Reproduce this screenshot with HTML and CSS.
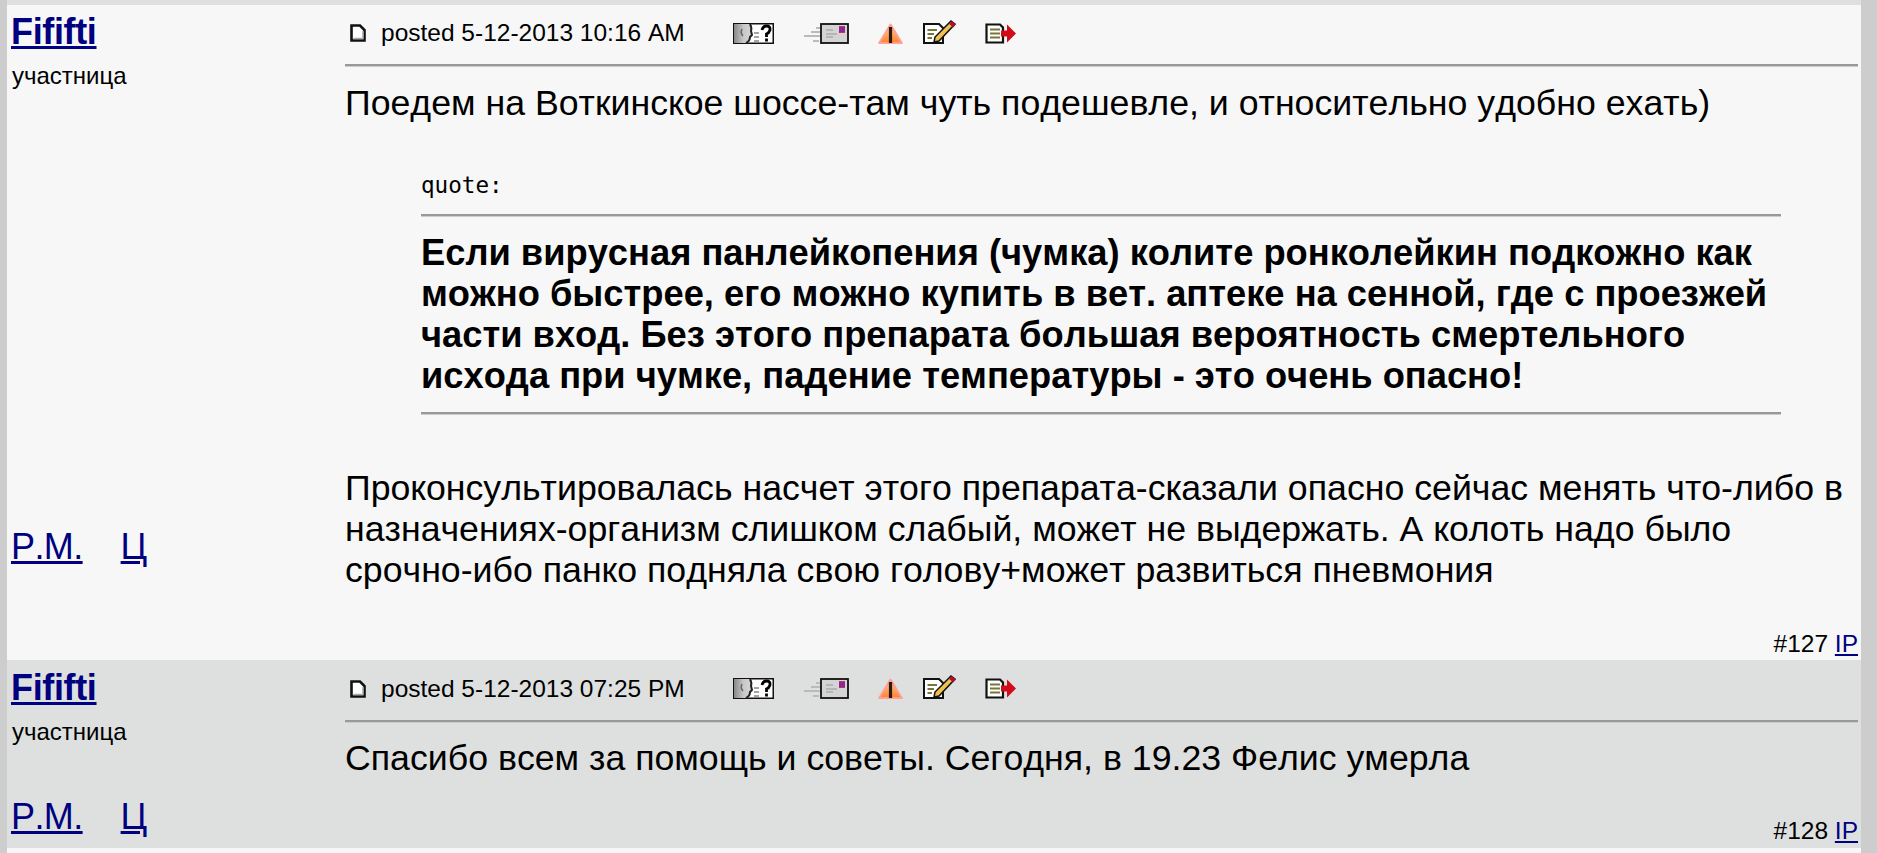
FILE: index.html
```html
<!DOCTYPE html>
<html lang="ru">
<head>
<meta charset="utf-8">
<title>Fififti</title>
<link rel="stylesheet" href="styles.css">
</head>
<body>
<svg class="defs" width="0" height="0" aria-hidden="true">
  <defs>
    <linearGradient id="g-warn" x1="0" y1="0" x2="0" y2="1">
      <stop offset="0" stop-color="#ffc8b8"/>
      <stop offset="0.5" stop-color="#ffa860"/>
      <stop offset="1" stop-color="#ff8030"/>
    </linearGradient>
    <linearGradient id="g-head" x1="0" y1="0" x2="1" y2="0">
      <stop offset="0" stop-color="#888"/>
      <stop offset="0.5" stop-color="#c8c8c8"/>
      <stop offset="1" stop-color="#d8d8d8"/>
    </linearGradient>
    <symbol id="i-doc" viewBox="0 0 16 18">
      <path d="M1.500 1.500H10L14.500 6V16.500H1.500Z" fill="#fff" stroke="#111" stroke-width="2.600"/>
      <path d="M3.500 14.500H13V7" fill="none" stroke="#aaa" stroke-width="1.500"/>
    </symbol>
    <symbol id="i-profile" viewBox="0 0 41 21">
      <rect x="0.750" y="0.750" width="39.500" height="19.500" fill="#fff" stroke="#111" stroke-width="1.500"/>
      <path d="M1 1H18Q20 5 19 8L20 12 18 14Q18 19 14 20H1Z" fill="url(#g-head)"/>
      <path d="M17 1Q19 5 18 8L19 12 17 14Q17 18 13 20" fill="none" stroke="#222" stroke-width="2"/>
      <path d="M9 6Q7 10 10 13" fill="none" stroke="#666" stroke-width="1.500"/>
      <path d="M21 10H26M21 14H26M21 18H26" stroke="#888" stroke-width="1.500"/>
      <path d="M29 7Q30 3 33.500 3 37.500 3 37 7 36 10 33.500 11V14M33.500 15.500V18.500" fill="none" stroke="#000" stroke-width="2.800"/>
    </symbol>
    <symbol id="i-mail" viewBox="0 0 46 21">
      <path d="M13 5H18M8 9H18M1 13H18M10 18H16" stroke="#bbb" stroke-width="2"/>
      <rect x="18" y="1" width="27" height="19" fill="#d4d4d4" stroke="#111" stroke-width="1.800"/>
      <path d="M23 7H30M23 11H34M23 14H30" stroke="#aaa" stroke-width="1.500"/>
      <rect x="36" y="3.500" width="6" height="6" fill="#8a2a9a"/>
      <path d="M36 3.500H42M36 9.500H42" stroke="#d03050" stroke-width="1"/>
    </symbol>
    <symbol id="i-warn" viewBox="0 0 25 21">
      <path d="M12.500 1.500L23.800 20H1.200Z" fill="url(#g-warn)" stroke="#ffa090" stroke-width="2" stroke-linejoin="round"/>
      <path d="M12.500 4V20" stroke="#2a1a10" stroke-width="3.200"/>
    </symbol>
    <symbol id="i-edit" viewBox="0 0 34 25">
      <path d="M1 5H16L20 9V24H1Z" fill="#fff" stroke="#111" stroke-width="2"/>
      <path d="M4.500 11H14M4.500 15H11M4.500 19H9" stroke="#77773c" stroke-width="2"/>
      <path d="M11 23L12 18 28 2 32 5 16 22Z" fill="#f0c050" stroke="#111" stroke-width="1.500"/>
      <path d="M27.500 3.500L31.500 7" stroke="#b01030" stroke-width="4"/>
    </symbol>
    <symbol id="i-out" viewBox="0 0 32 21">
      <path d="M1.500 1.500H15L18 4.500V19.500H1.500Z" fill="#fff" stroke="#111" stroke-width="2.200"/>
      <path d="M5 6.500H15M5 10.500H15M5 14.500H15" stroke="#77773c" stroke-width="2"/>
      <path d="M16 7.500H22V1.500L31 10.500 22 19.500V13.500H16Z" fill="#d00c18"/>
    </symbol>
  </defs>
</svg>
<main class="page">
  <article class="post post-light">
    <aside class="author">
      <div class="author-top">
        <a class="author-name" href="#">Fififti</a>
        <div class="author-role">участница</div>
      </div>
      <div class="author-links"><a href="#">Р.М.</a><a href="#">Ц</a></div>
    </aside>
    <div class="content">
      <header class="post-head">
        <svg class="ic ic-doc"><use href="#i-doc"/></svg>
        <span class="post-date">posted 5-12-2013 10:16 AM</span>
        <span class="tools">
          <svg class="ic ic-profile"><use href="#i-profile"/></svg>
          <svg class="ic ic-mail"><use href="#i-mail"/></svg>
          <svg class="ic ic-warn"><use href="#i-warn"/></svg>
          <svg class="ic ic-edit"><use href="#i-edit"/></svg>
          <svg class="ic ic-out"><use href="#i-out"/></svg>
        </span>
      </header>
      <div class="body">
        <p>Поедем на Воткинское шоссе-там чуть подешевле, и относительно удобно ехать)</p>
        <blockquote class="quote">
          <div class="quote-label">quote:</div>
          <div class="quote-text">Если вирусная панлейкопения (чумка) колите ронколейкин подкожно как можно быстрее, его можно купить в вет. аптеке на сенной, где с проезжей части вход. Без этого препарата большая вероятность смертельного исхода при чумке, падение температуры - это очень опасно!</div>
        </blockquote>
        <p>Проконсультировалась насчет этого препарата-сказали опасно сейчас менять что-либо в назначениях-организм слишком слабый, может не выдержать. А колоть надо было срочно-ибо панко подняла свою голову+может развиться пневмония</p>
      </div>
      <footer class="post-foot">#127 <a href="#">IP</a></footer>
    </div>
  </article>
  <article class="post post-dark">
    <aside class="author">
      <div class="author-top">
        <a class="author-name" href="#">Fififti</a>
        <div class="author-role">участница</div>
      </div>
      <div class="author-links"><a href="#">Р.М.</a><a href="#">Ц</a></div>
    </aside>
    <div class="content">
      <header class="post-head">
        <svg class="ic ic-doc"><use href="#i-doc"/></svg>
        <span class="post-date">posted 5-12-2013 07:25 PM</span>
        <span class="tools">
          <svg class="ic ic-profile"><use href="#i-profile"/></svg>
          <svg class="ic ic-mail"><use href="#i-mail"/></svg>
          <svg class="ic ic-warn"><use href="#i-warn"/></svg>
          <svg class="ic ic-edit"><use href="#i-edit"/></svg>
          <svg class="ic ic-out"><use href="#i-out"/></svg>
        </span>
      </header>
      <div class="body">
        <p>Спасибо всем за помощь и советы. Сегодня, в 19.23 Фелис умерла</p>
      </div>
      <footer class="post-foot">#128 <a href="#">IP</a></footer>
    </div>
  </article>
</main>
</body>
</html>
```
FILE: styles.css
```css
html, body { margin: 0; padding: 0; }
body {
  height: 853px;
  overflow: hidden;
  background: #cdcdcd;
  font-family: "Liberation Sans", Arial, sans-serif;
  color: #000;
  font-kerning: none;
}
.defs { position: absolute; }
a { color: #000080; }
.page {
  margin: 0 16px 0 7px;
  height: 853px;
  padding-top: 5px;
  box-sizing: border-box;
  background: #f7f7f7;
  position: relative;
}
.page::before {
  content: "";
  position: absolute;
  left: 0; right: 0; top: 0;
  height: 5px;
  background: #dee0df;
}
.post {
  display: grid;
  grid-template-columns: 338px 1fr;
  box-sizing: border-box;
}
.post-light { height: 655px; background: #f7f7f7; }
.post-dark { height: 188px; background: #dee0df; }
.author {
  padding-left: 4px;
  display: flex;
  flex-direction: column;
  justify-content: space-between;
}
.author-name {
  display: inline-block;
  font-size: 36px;
  line-height: 41px;
  font-weight: bold;
  letter-spacing: -0.35px;
  margin-top: 6px;
}
.post-dark .author-name { margin-top: 7px; }
.author-role { font-size: 24px; line-height: 28px; margin: 10px 0 0 1px; }
.author-links { font-size: 36px; line-height: 41px; margin-bottom: 93px; }
.author-links a { margin-right: 38px; letter-spacing: -0.6px; }
.post-dark .author-links { margin-bottom: 11px; }
.content {
  padding: 0 3px 0 0;
  display: flex;
  flex-direction: column;
}
.post-head {
  display: flex;
  align-items: center;
  height: 61px;
  padding-bottom: 3px;
  border-bottom: 2px solid #999;
  box-shadow: 0 1px 0 #ccc;
  font-size: 24.5px;
  line-height: 28px;
  box-sizing: border-box;
}
.post-dark .post-head { height: 62px; }
.ic { display: block; flex: none; filter: blur(0.4px); }
.ic-doc { width: 16px; height: 18px; margin-left: 5px; }
.post-date { margin-left: 15px; width: 352px; }
.tools { display: flex; align-items: center; }
.ic-profile { width: 41px; height: 21px; }
.ic-mail { width: 46px; height: 21px; margin-left: 29px; }
.ic-warn { width: 25px; height: 21px; margin-left: 29px; }
.ic-edit { width: 34px; height: 25px; margin-left: 20px; margin-top: -4px; }
.ic-out { width: 32px; height: 21px; margin-left: 28px; }
.body { flex: 1; font-size: 35.7px; line-height: 41px; }
.body p { margin: 0; }
.post-light .body p:first-child { padding-top: 17px; }
.post-dark .body p:first-child { padding-top: 16px; }
.quote { margin: 46px 77px 0 76px; padding: 0; }
.quote-label {
  font-family: "DejaVu Sans Mono", monospace;
  font-size: 22.6px;
  line-height: 30px;
  padding-bottom: 14px;
  border-bottom: 2px solid #999;
  box-shadow: 0 1px 0 #ccc;
}
.quote-text {
  font-size: 36.3px;
  font-weight: bold;
  padding: 16px 0;
  border-bottom: 2px solid #999;
  box-shadow: 0 1px 0 #ccc;
  margin-bottom: 54px;
}
.post-foot {
  text-align: right;
  font-size: 24.5px;
  line-height: 28px;
  padding-bottom: 2px;
}
.post-dark .post-foot { padding-bottom: 3px; }
```
